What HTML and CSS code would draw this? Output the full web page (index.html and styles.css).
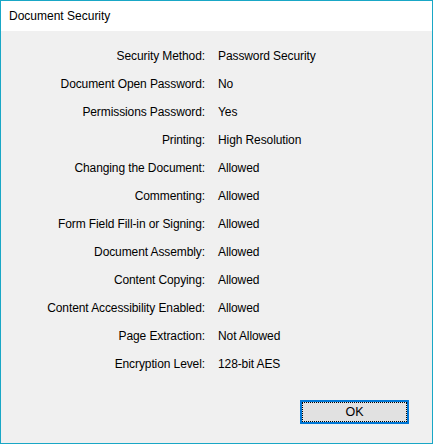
FILE: index.html
```html
<!DOCTYPE html>
<html>
<head>
<meta charset="utf-8">
<link rel="stylesheet" href="styles.css">
</head>
<body>
<div class="window">
  <div class="titlebar">Document Security</div>
  <div class="content">
    <div class="grid">
      <div class="label">Security Method:</div><div class="value">Password Security</div>
      <div class="label">Document Open Password:</div><div class="value">No</div>
      <div class="label">Permissions Password:</div><div class="value">Yes</div>
      <div class="label">Printing:</div><div class="value">High Resolution</div>
      <div class="label">Changing the Document:</div><div class="value">Allowed</div>
      <div class="label">Commenting:</div><div class="value">Allowed</div>
      <div class="label">Form Field Fill-in or Signing:</div><div class="value">Allowed</div>
      <div class="label">Document Assembly:</div><div class="value">Allowed</div>
      <div class="label">Content Copying:</div><div class="value">Allowed</div>
      <div class="label">Content Accessibility Enabled:</div><div class="value">Allowed</div>
      <div class="label">Page Extraction:</div><div class="value">Not Allowed</div>
      <div class="label">Encryption Level:</div><div class="value">128-bit AES</div>
    </div>
    <div class="footer">
      <button class="btn"><span class="focus">OK</span></button>
    </div>
  </div>
</div>
</body>
</html>
```
FILE: styles.css
```css
* { box-sizing: border-box; }
html, body { margin: 0; padding: 0; background: #f0f0f0; }
body {
  font-family: "Liberation Sans", Arial, sans-serif;
  font-size: 12px;
  color: #000;
}
.window {
  width: 433px;
  height: 444px;
  border: 1px solid #19a7c6;
  background: #f0f0f0;
  display: flex;
  flex-direction: column;
}
.titlebar {
  height: 30px;
  background: #fff;
  line-height: 30px;
  padding-left: 8px;
}
.content {
  padding-top: 11px;
}
.grid {
  display: grid;
  grid-template-columns: 204px 1fr;
  column-gap: 13px;
  grid-auto-rows: 28px;
  line-height: 28px;
  letter-spacing: -0.1px;
}
.label { text-align: right; white-space: nowrap; }
.value { white-space: nowrap; }
.footer {
  display: flex;
  justify-content: flex-end;
  padding-right: 23px;
  margin-top: 22px;
}
.btn {
  width: 109px;
  height: 24px;
  border: 2px solid #0078d7;
  background: #e1e1e1;
  padding: 0;
  margin: 0;
  font: inherit;
  font-size: 12.5px;
  color: #000;
  display: flex;
}
.focus {
  flex: 1;
  border: 1px dotted #000;
  display: flex;
  align-items: center;
  justify-content: center;
  line-height: 1;
}
```
